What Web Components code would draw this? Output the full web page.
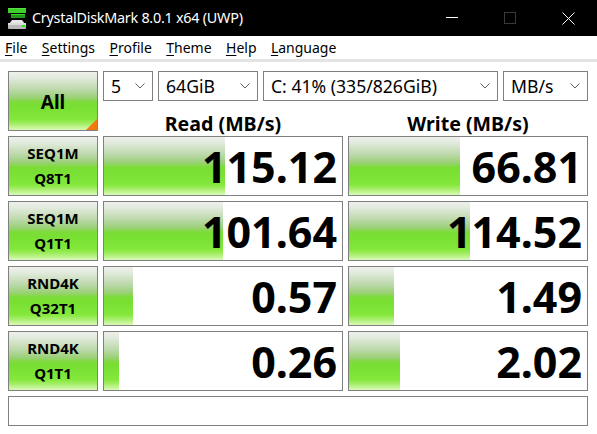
<!DOCTYPE html>
<html><head><meta charset="utf-8">
<style>
html,body{margin:0;padding:0;background:#fff;height:100%;overflow:hidden}
body{font-family:"Noto Sans","Open Sans",sans-serif;color:#000}
</style></head><body>
<cdm-app></cdm-app>
<script>
const GRAD='linear-gradient(180deg,#eef1ec 0%,#e2eadd 10%,#bcd9ab 30%,#9bd078 44%,#7cdc38 52%,#78e032 60%,#84e83c 82%,#a8ee6c 90%,#dafab8 100%)';
function el(name,css,html){
  customElements.define(name,class extends HTMLElement{
    connectedCallback(){
      if(this.shadowRoot)return;
      const r=this.attachShadow({mode:'open'});
      r.innerHTML='<style>'+css+'</style>'+(typeof html==='function'?html(this):html);
    }
  });
}
el('cdm-titlebar',`:host{display:flex;align-items:center;height:36px;background:#000;color:#fff;font-size:14.4px;padding-left:7px}
.t{margin-left:5px;white-space:nowrap;letter-spacing:-.26px;flex:1;padding-bottom:1px}
.c{display:flex;align-items:center}
svg{display:block}.b{width:58px;height:36px;display:flex;align-items:center;justify-content:center}`,
`<svg width="20" height="22" viewBox="0 0 20 22"><rect x="1" y="1" width="18" height="5" fill="#3fcf2c"/><rect x="1" y="1" width="18" height="1" fill="#58e040"/><rect x="4" y="7" width="14" height="4" fill="#1f9a1a"/><rect x="4" y="7" width="14" height="1" fill="#3fcf2c"/>
<path d="M5 13 H15 L18 17 H2 Z" fill="#e8e8e8"/><rect x="1" y="16" width="18" height="6" rx="1" fill="#b9b9b9"/><rect x="1" y="16" width="18" height="2" fill="#dcdcdc"/><rect x="15" y="18" width="3" height="2" fill="#3fcf2c"/></svg>
<div class="t">CrystalDiskMark 8.0.1 x64 (UWP)</div>
<div class="c">
<div class="b"><svg width="12" height="12" viewBox="0 0 12 12"><path d="M0 5.5H12" stroke="#fff" fill="none"/></svg></div>
<div class="b"><svg width="12" height="12" viewBox="0 0 12 12"><rect x=".5" y=".5" width="11" height="11" stroke="#3a3a3a" fill="none"/></svg></div>
<div class="b"><svg width="13" height="13" viewBox="0 0 13 13"><path d="M.5.5L12.5 12.5M12.5.5L.5 12.5" stroke="#fff" fill="none"/></svg></div>
</div>`);
el('cdm-menu',`:host{display:flex;height:23px;align-items:center;padding-left:5px;font-size:14px;gap:14.4px;background:#fff;border-bottom:3px solid #e4e4e4;white-space:nowrap}
u{text-underline-offset:2px;text-decoration-thickness:1px}`,
`<span><u>F</u>ile</span><span><u>S</u>ettings</span><span><u>P</u>rofile</span><span><u>T</u>heme</span><span><u>H</u>elp</span><span><u>L</u>anguage</span>`);
el('cdm-button',`:host{display:flex;flex-direction:column;align-items:center;justify-content:center;box-sizing:border-box;border:1px solid #808080;background:${GRAD};font-weight:700;position:relative;font-size:15px;line-height:25px;height:60px;overflow:hidden;text-align:center}
:host([big]){font-size:19px;padding-top:3px}
:host([big])::after{content:"";position:absolute;right:0;bottom:0;border-style:solid;border-width:0 0 11px 11px;border-color:transparent transparent #f4780c transparent}`,
`<slot></slot>`);
el('cdm-select',`:host{display:flex;align-items:center;box-sizing:border-box;height:30px;border:1px solid #808080;padding:0 7px;font-size:17.6px;background:#fff;white-space:nowrap}
.t{flex:1}svg{display:block}`,
`<span class="t"><slot></slot></span><svg width="10" height="6" viewBox="0 0 10 6"><path d="M.5.5L5 5L9.5.5" stroke="#606060" fill="none"/></svg>`);
el('cdm-result',`:host{display:block;box-sizing:border-box;height:60px;border:1px solid #808080;position:relative;background:#fff}
.bar{height:100%;background:${GRAD}}
.v{position:absolute;right:5px;top:0;bottom:0;display:flex;align-items:center;font-weight:700;font-size:43px;line-height:1}`,
h=>`<div class="bar" style="width:${h.getAttribute('w')}px"></div><div class="v"><slot></slot></div>`);
el('cdm-head',`:host{display:flex;align-items:center;justify-content:center;height:35px;font-weight:700;font-size:19.6px;white-space:nowrap;padding-top:10px;box-sizing:border-box}`,`<slot></slot>`);
el('cdm-message',`:host{display:block;box-sizing:border-box;height:30px;border:1px solid #808080;background:#fff}`,``);
el('cdm-app',`:host{display:block}
.main{display:grid;grid-template-columns:90px 240px 240px;column-gap:5px;row-gap:5px;padding:9px 9px 0 8px}
.top{grid-column:2/4;display:flex;gap:5px}
.heads{grid-column:2/4;display:grid;grid-template-columns:240px 240px;column-gap:5px;margin:-5px 0}
.all{grid-row:1/3;height:60px}
.msg{grid-column:1/4}`,
`<cdm-titlebar></cdm-titlebar><cdm-menu></cdm-menu>
<div class="main">
<cdm-button big class="all">All</cdm-button>
<div class="top">
<cdm-select style="width:50px">5</cdm-select><cdm-select style="width:100px">64GiB</cdm-select><cdm-select style="width:235px">C: 41% (335/826GiB)</cdm-select><cdm-select style="width:85px">MB/s</cdm-select>
</div>
<div class="heads"><cdm-head>Read (MB/s)</cdm-head><cdm-head>Write (MB/s)</cdm-head></div>
<cdm-button>SEQ1M<br>Q8T1</cdm-button><cdm-result w="121">115.12</cdm-result><cdm-result w="111">66.81</cdm-result>
<cdm-button>SEQ1M<br>Q1T1</cdm-button><cdm-result w="119">101.64</cdm-result><cdm-result w="121">114.52</cdm-result>
<cdm-button>RND4K<br>Q32T1</cdm-button><cdm-result w="29">0.57</cdm-result><cdm-result w="45">1.49</cdm-result>
<cdm-button>RND4K<br>Q1T1</cdm-button><cdm-result w="15">0.26</cdm-result><cdm-result w="51">2.02</cdm-result>
<cdm-message class="msg"></cdm-message>
</div>`);
</script>
</body></html>
